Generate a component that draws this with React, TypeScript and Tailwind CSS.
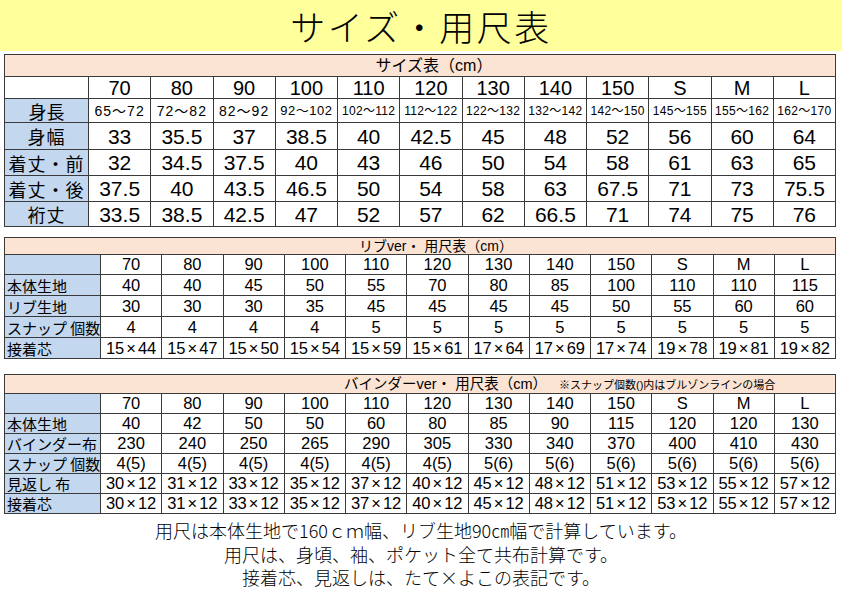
import React from "react"

const sizes = ["70", "80", "90", "100", "110", "120", "130", "140", "150", "S", "M", "L"]

const heightRange = [
  "65〜72", "72〜82", "82〜92", "92〜102", "102〜112", "112〜122",
  "122〜132", "132〜142", "142〜150", "145〜155", "155〜162", "162〜170",
]

const sizeRows = [
  { label: "身幅", values: ["33", "35.5", "37", "38.5", "40", "42.5", "45", "48", "52", "56", "60", "64"], h: "h-[27px]" },
  { label: "着丈・前", values: ["32", "34.5", "37.5", "40", "43", "46", "50", "54", "58", "61", "63", "65"], h: "h-[26px]" },
  { label: "着丈・後", values: ["37.5", "40", "43.5", "46.5", "50", "54", "58", "63", "67.5", "71", "73", "75.5"], h: "h-[26px]" },
  { label: "裄丈", values: ["33.5", "38.5", "42.5", "47", "52", "57", "62", "66.5", "71", "74", "75", "76"], h: "h-[25px]" },
]

const ribRows = [
  { label: "本体生地", values: ["40", "40", "45", "50", "55", "70", "80", "85", "100", "110", "110", "115"] },
  { label: "リブ生地", values: ["30", "30", "30", "35", "45", "45", "45", "45", "50", "55", "60", "60"] },
  { label: "スナップ 個数", values: ["4", "4", "4", "4", "5", "5", "5", "5", "5", "5", "5", "5"] },
  { label: "接着芯", values: ["15×44", "15×47", "15×50", "15×54", "15×59", "15×61", "17×64", "17×69", "17×74", "19×78", "19×81", "19×82"] },
]

const facing = ["30×12", "31×12", "33×12", "35×12", "37×12", "40×12", "45×12", "48×12", "51×12", "53×12", "55×12", "57×12"]

const binderRows = [
  { label: "本体生地", values: ["40", "42", "50", "50", "60", "80", "85", "90", "115", "120", "120", "130"] },
  { label: "バインダー布", values: ["230", "240", "250", "265", "290", "305", "330", "340", "370", "400", "410", "430"] },
  { label: "スナップ 個数", values: ["4(5)", "4(5)", "4(5)", "4(5)", "4(5)", "4(5)", "5(6)", "5(6)", "5(6)", "5(6)", "5(6)", "5(6)"] },
  { label: "見返し 布", values: facing },
  { label: "接着芯", values: facing },
]

const font = "font-['Liberation_Sans','Noto_Sans_CJK_JP',sans-serif]"
const jp = "font-['Noto_Sans_CJK_JP',sans-serif]"
const cell = "border border-[#3a3a3a] text-center leading-none p-0"
const blue = "bg-[#c3d7ef]"
const pink = "bg-[#fce4d4]"

function rangeSize(i: number) {
  if (i < 3) return "text-[14px] tracking-[1px]"
  if (i === 3) return "text-[13px] tracking-[0.5px]"
  return "text-[12px] tracking-[0.3px]"
}

// "15×44" -> a little air round the cross, as in the sheet
function Dim({ v }: { v: string }) {
  const parts = v.split("×")
  if (parts.length < 2) return <>{v}</>
  return (
    <>
      {parts[0]}
      <span className="mx-[2px]">×</span>
      {parts[1]}
    </>
  )
}

function SizeTable() {
  return (
    <table className={`w-[832px] table-fixed border-collapse ${font} text-black`}>
      <colgroup>
        <col className="w-[84px]" />
        {sizes.map(s => <col key={s} />)}
      </colgroup>
      <tbody>
        <tr className="h-[22px]">
          <td colSpan={13} className={`${cell} ${pink} text-[16px] pl-[28px]`}>サイズ表（cm）</td>
        </tr>
        <tr className="h-[22px]">
          <td className={cell}></td>
          {sizes.map(s => <td key={s} className={`${cell} text-[20px]`}>{s}</td>)}
        </tr>
        <tr className="h-[24px]">
          <td className={`${cell} ${blue} ${jp} text-[18px]`}>身長</td>
          {heightRange.map((v, i) => (
            <td key={v} className={`${cell} ${rangeSize(i)} whitespace-nowrap overflow-hidden`}>{v}</td>
          ))}
        </tr>
        {sizeRows.map(row => (
          <tr key={row.label} className={row.h}>
            <td className={`${cell} ${blue} ${jp} text-[18px] tracking-[1px]`}>{row.label}</td>
            {row.values.map((v, i) => <td key={i} className={`${cell} text-[21px]`}>{v}</td>)}
          </tr>
        ))}
      </tbody>
    </table>
  )
}

function PartsTable({ title, note, rows, headH, rowH }: {
  title: string
  note?: string
  rows: { label: string; values: string[] }[]
  headH: string
  rowH: string
}) {
  return (
    <table className={`w-[832px] table-fixed border-collapse ${font} text-black`}>
      <colgroup>
        <col className="w-[96px]" />
        {sizes.map(s => <col key={s} />)}
      </colgroup>
      <tbody>
        <tr className={headH}>
          {note ? (
            <td colSpan={13} className={`${cell} ${pink} text-left pl-[339px]`}>
              <span className="text-[14.5px]">{title}</span>
              <span className="ml-[12px] text-[11px]">{note}</span>
            </td>
          ) : (
            <td colSpan={13} className={`${cell} ${pink} pl-[32px]`}>
              <span className="text-[14px]">{title}</span>
            </td>
          )}
        </tr>
        <tr className="h-[20px]">
          <td className={`${cell} ${blue}`}></td>
          {sizes.map(s => <td key={s} className={`${cell} text-[16.5px]`}>{s}</td>)}
        </tr>
        {rows.map(row => (
          <tr key={row.label} className={rowH}>
            <td className={`${cell} ${blue} ${jp} text-left pl-[2px] text-[15px] whitespace-nowrap`}>{row.label}</td>
            {row.values.map((v, i) => (
              <td key={i} className={`${cell} text-[16.5px] whitespace-nowrap`}>
                <Dim v={v} />
              </td>
            ))}
          </tr>
        ))}
      </tbody>
    </table>
  )
}

export default function App() {
  return (
    <div className="w-[842px] h-[595px] bg-white overflow-hidden">
      <div className={`h-[51px] bg-[#ffff9c] flex items-center justify-center ${jp} font-light text-[35px] leading-none text-black`}>
        <span className="tracking-[2.5px]">サイズ・用尺表</span>
      </div>
      <div className="flex flex-col pl-[4px] pt-[3px]">
        <SizeTable />
        <div className="h-[10px]" />
        <PartsTable title="リブver・ 用尺表（cm）" rows={ribRows} headH="h-[17px]" rowH="h-[21px]" />
        <div className="h-[15px]" />
        <PartsTable
          title="バインダーver・ 用尺表（cm）"
          note="※スナップ個数()内はブルゾンラインの場合"
          rows={binderRows}
          headH="h-[19px]"
          rowH="h-[20px]"
        />
      </div>
      <div className={`mt-[5px] flex flex-col items-center ${jp} font-light text-[18px] leading-[23.5px] text-black`}>
        <p>用尺は本体生地で160ｃｍ幅、リブ生地90㎝幅で計算しています。</p>
        <p>用尺は、身頃、袖、ポケット全て共布計算です。</p>
        <p>接着芯、見返しは、たて×よこの表記です。</p>
      </div>
    </div>
  )
}
